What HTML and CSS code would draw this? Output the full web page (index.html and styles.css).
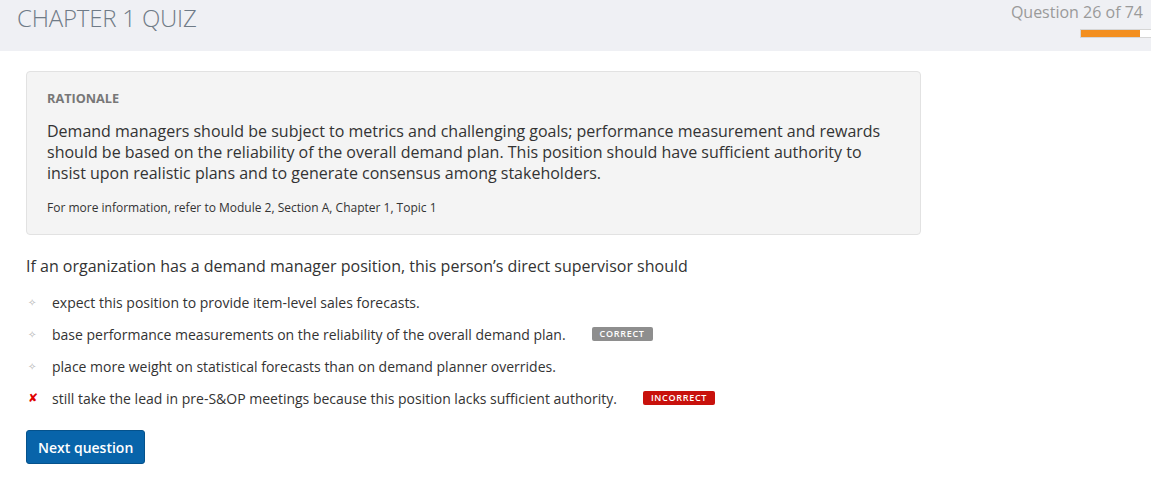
FILE: index.html
```html
<!DOCTYPE html>
<html>
<head>
<meta charset="utf-8">
<link rel="stylesheet" href="styles.css">
</head>
<body>
<header class="top">
  <h1 class="title">CHAPTER 1 QUIZ</h1>
  <div class="progress-wrap">
    <div class="counter">Question 26 of 74</div>
    <div class="bar"><div class="bar-fill" style="width:84%"></div></div>
  </div>
</header>
<main class="content">
  <section class="rationale">
    <div class="r-label">RATIONALE</div>
    <p class="r-text">Demand managers should be subject to metrics and challenging goals; performance measurement and rewards should be based on the reliability of the overall demand plan. This position should have sufficient authority to insist upon realistic plans and to generate consensus among stakeholders.</p>
    <p class="r-ref">For more information, refer to Module 2, Section A, Chapter 1, Topic 1</p>
  </section>
  <p class="question">If an organization has a demand manager position, this person’s direct supervisor should</p>
  <ul class="options">
    <li class="opt"><span class="mark dot">&#10023;</span><span class="opt-text">expect this position to provide item-level sales forecasts.</span></li>
    <li class="opt"><span class="mark dot">&#10023;</span><span class="opt-text">base performance measurements on the reliability of the overall demand plan.</span><span class="tag tag-correct">CORRECT</span></li>
    <li class="opt"><span class="mark dot">&#10023;</span><span class="opt-text">place more weight on statistical forecasts than on demand planner overrides.</span></li>
    <li class="opt"><span class="mark cross">&#10008;</span><span class="opt-text">still take the lead in pre-S&amp;OP meetings because this position lacks sufficient authority.</span><span class="tag tag-incorrect">INCORRECT</span></li>
  </ul>
  <button class="next">Next question</button>
</main>
</body>
</html>
```
FILE: styles.css
```css
html, body {
  margin: 0;
  padding: 0;
  background: #ffffff;
  font-family: "Open Sans", "Liberation Sans", sans-serif;
  color: #333;
}
.top {
  height: 51px;
  background: #eff0f4;
  display: flex;
  justify-content: space-between;
  align-items: flex-start;
}
.title {
  margin: 0;
  padding: 3px 0 0 17px;
  font-size: 24px;
  font-weight: 300;
  color: #6f7b87;
  line-height: 30px;
  letter-spacing: -0.2px;
}
.progress-wrap {
  display: flex;
  flex-direction: column;
  align-items: flex-end;
  padding-top: 1px;
}
.counter {
  font-size: 16px;
  color: #9a9a9a;
  line-height: 22px;
  padding-right: 8px;
}
.bar {
  margin-top: 6px;
  width: 70px;
  height: 7px;
  background: #fff;
  border: 1px solid #d6d6d6;
  border-right: none;
}
.bar-fill {
  height: 100%;
  background: #f38f1f;
}
.content {
  padding: 20px 26px 20px 26px;
}
.rationale {
  width: 853px;
  background: #f4f4f4;
  border: 1px solid #e2e2e2;
  border-radius: 4px;
  padding: 18px 20px 18px 20px;
}
.r-label {
  font-size: 12.7px;
  font-weight: 700;
  color: #777;
  line-height: 17px;
}
.r-text {
  margin: 14px 0 0 0;
  font-size: 16px;
  line-height: 21px;
  color: #333;
}
.r-ref {
  margin: 16px 0 0 0;
  font-size: 12px;
  line-height: 16px;
  color: #333;
}
.question {
  margin: 20px 0 0 0;
  font-size: 16px;
  line-height: 22px;
  color: #333;
}
.options {
  list-style: none;
  margin: 9px 0 0 0;
  padding: 0;
}
.opt {
  display: flex;
  align-items: center;
  height: 32px;
  font-size: 14px;
}
.mark {
  width: 26px;
  flex: none;
  font-size: 10px;
  padding-left: 2px;
  box-sizing: border-box;
}
.dot {
  color: #b5b5b5;
}
.cross {
  color: #e00000;
  font-size: 12px;
  font-style: italic;
  font-family: "DejaVu Sans", sans-serif;
}
.opt-text {
  color: #333;
}
.tag {
  margin-left: 26px;
  font-size: 9px;
  font-weight: 600;
  letter-spacing: 0.7px;
  color: #fff;
  line-height: 14px;
  padding: 0 8px;
  border-radius: 2px;
}
.tag-correct {
  background: #8e8e8e;
}
.tag-incorrect {
  background: #c8110c;
}
.next {
  display: block;
  margin-top: 16px;
  background: #0864aa;
  color: #fff;
  border: 1px solid #05528c;
  border-radius: 3px;
  font-family: "Open Sans", "Liberation Sans", sans-serif;
  font-size: 14px;
  font-weight: 600;
  padding: 0 11px;
  height: 34px;
  white-space: nowrap;
}
```
